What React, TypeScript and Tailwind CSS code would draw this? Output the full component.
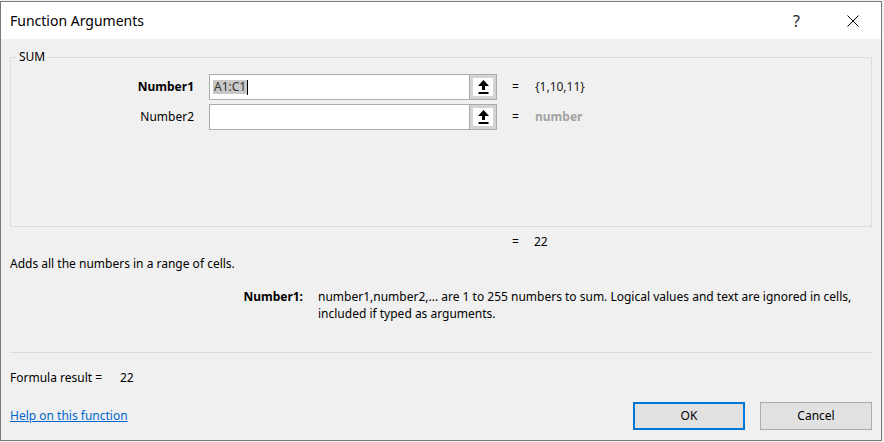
import { useState } from 'react';

function RefButton() {
  return (
    <div className="w-[27px] h-full border-l border-[#ababab] bg-[#d4d4d4] p-[3px] flex">
      <div className="flex-1 bg-white flex items-center justify-center">
        <svg width="11" height="14" viewBox="0 0 11 14">
          <polygon points="5.5,0 11,6 7,6 7,10 4,10 4,6 0,6" fill="#000" />
          <rect x="0.5" y="12" width="10" height="2" fill="#000" />
        </svg>
      </div>
    </div>
  );
}

function ArgRow({ label, bold, value, hint, selected }: { label: string; bold?: boolean; value: string; hint?: boolean; selected?: boolean }) {
  return (
    <div className="flex items-center h-[26px]">
      <div className={`w-[183px] text-right ${bold ? 'font-bold' : ''}`}>{label}</div>
      <div className="ml-[15px] w-[288px] h-[26px] border border-[#ababab] bg-white flex">
        <div className="flex-1 flex items-center pl-[3px]">
          {selected && (
            <>
              <span className="bg-[#c8c8c8] text-[#333] leading-[14px] px-px">A1:C1</span>
              <span className="w-px h-[15px] bg-black" />
            </>
          )}
        </div>
        <RefButton />
      </div>
      <span className="ml-[15px] w-[23px]">=</span>
      <span className={hint ? 'font-bold text-[#a3a3a3]' : 'text-[#1a1a1a]'}>{value}</span>
    </div>
  );
}

export default function App() {
  const [result] = useState('22');

  return (
    <div className="w-[884px] h-[442px] bg-[#f2f2f2] pt-px font-['Noto_Sans',sans-serif] text-[12px] text-black leading-[16px]">
      <div className="w-[882px] h-[440px] border border-[#7a7a7a] bg-[#f0f0f0] flex flex-col">
        {/* Title bar */}
        <div className="h-[37px] bg-white flex items-center pl-[9px] shrink-0">
          <span className="flex-1 text-[14px] leading-[20px]">Function Arguments</span>
          <span className="text-[16px] text-[#222]">?</span>
          <svg className="ml-[47px] mr-[22px]" width="12" height="12" viewBox="0 0 12 12">
            <path d="M0.5 0.5 L11.5 11.5 M11.5 0.5 L0.5 11.5" stroke="#000" strokeWidth="1" />
          </svg>
        </div>

        <div className="flex-1 px-[9px] flex flex-col">
          {/* Group box */}
          <div className="relative mt-[18px] h-[170px] border border-[#dcdcdc] pt-[16px] flex flex-col gap-[4px]">
            <span className="absolute left-[6px] top-[-9px] px-[2px] bg-[#f0f0f0]">SUM</span>
            <ArgRow label="Number1" bold value="{1,10,11}" selected />
            <ArgRow label="Number2" value="number" hint />
          </div>

          <div className="mt-[7px] flex">
            <span className="ml-[502px] w-[22px]">=</span>
            <span>{result}</span>
          </div>

          <div className="mt-[6px]">Adds all the numbers in a range of cells.</div>

          <div className="mt-[16px] flex leading-[17px]">
            <div className="w-[293px] text-right font-bold">Number1:</div>
            <div className="ml-[15px] whitespace-nowrap">
              number1,number2,... are 1 to 255 numbers to sum. Logical values and text are ignored in cells,
              <br />
              included if typed as arguments.
            </div>
          </div>

          <div className="mt-[30px] h-px bg-[#dadada]" />

          <div className="mt-[17px] flex">
            <span className="w-[110px]">Formula result =</span>
            <span>{result}</span>
          </div>

          <div className="mt-[16px] h-[28px] flex items-center">
            <a href="#" className="flex-1 text-[#0066cc] underline">Help on this function</a>
            <button className="w-[112px] h-[28px] border-2 border-[#0078d7] bg-[#e1e1e1]">OK</button>
            <button className="ml-[15px] w-[112px] h-[28px] border border-[#adadad] bg-[#e1e1e1]">Cancel</button>
          </div>
        </div>
      </div>
    </div>
  );
}
